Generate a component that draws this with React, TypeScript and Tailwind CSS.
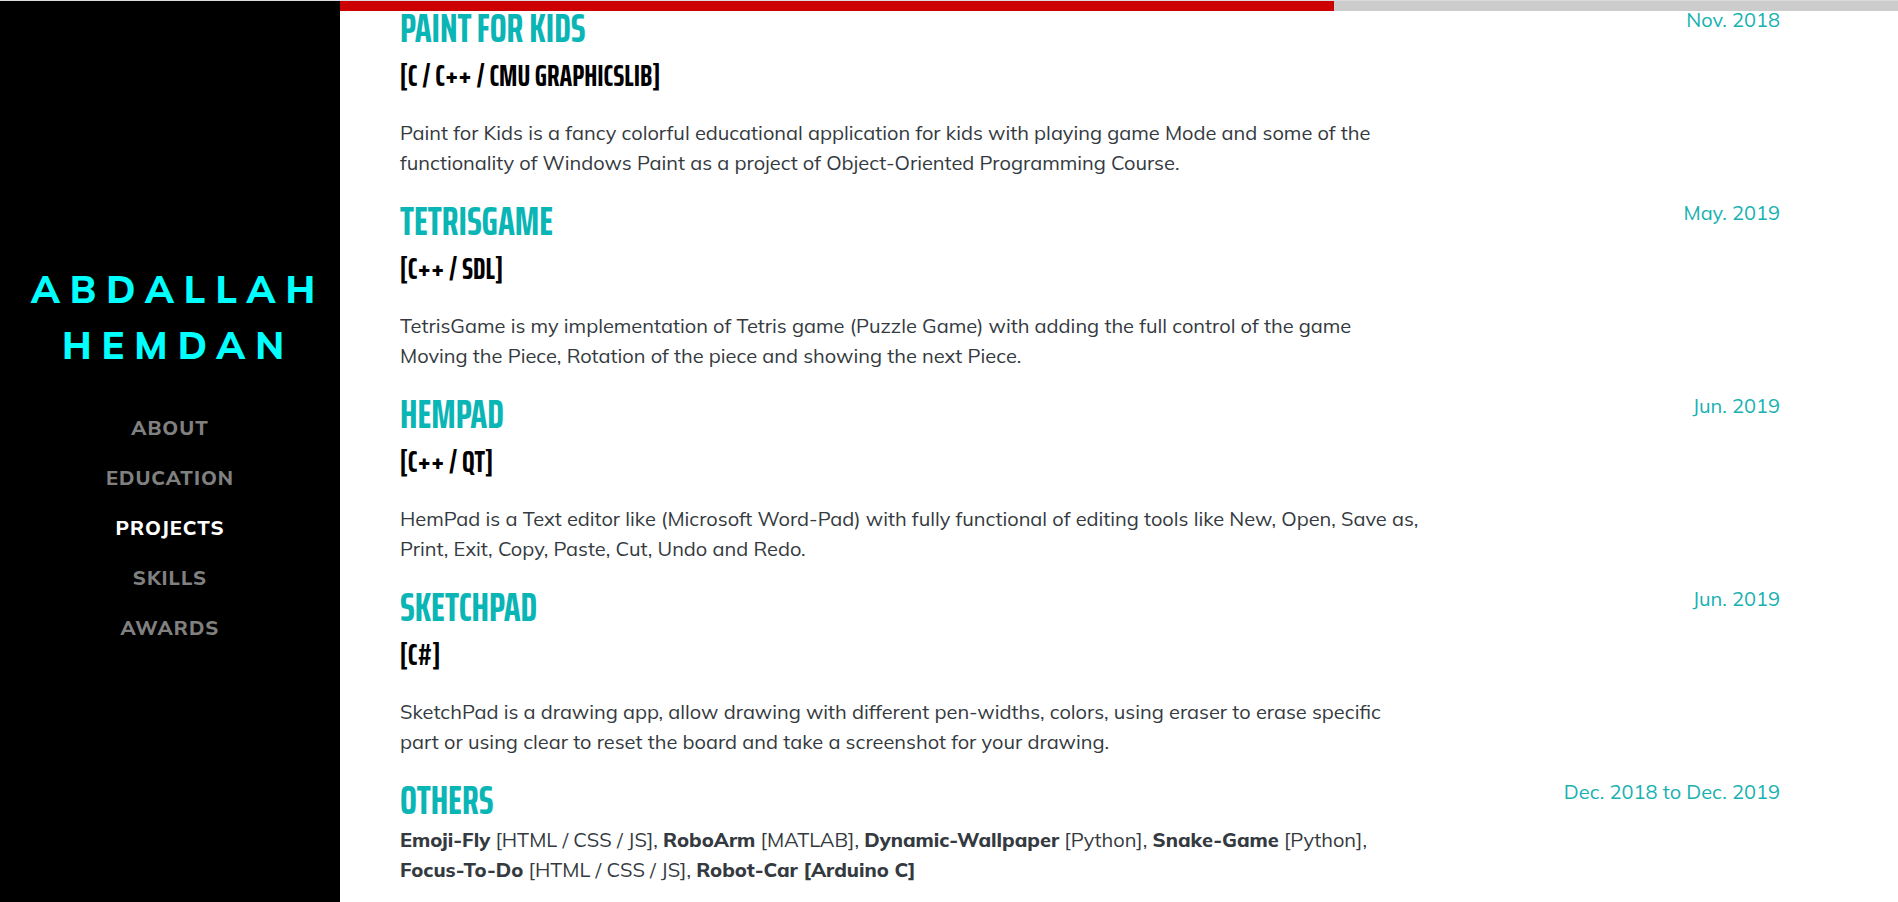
import type { ReactNode } from "react";

type Project = {
  title: string;
  stack?: string;
  date: string;
  body: ReactNode;
};

const links = ["About", "Education", "Projects", "Skills", "Awards"];
const active = "Projects";
const scrolled = 70.3;

const projects: Project[] = [
  {
    title: "Paint For Kids",
    stack: "[C / C++ / CMU graphicslib]",
    date: "Nov. 2018",
    body: "Paint for Kids is a fancy colorful educational application for kids with playing game Mode and some of the functionality of Windows Paint as a project of Object-Oriented Programming Course.",
  },
  {
    title: "TetrisGame",
    stack: "[C++ / SDL]",
    date: "May. 2019",
    body: "TetrisGame is my implementation of Tetris game (Puzzle Game) with adding the full control of the game\nMoving the Piece, Rotation of the piece and showing the next Piece.",
  },
  {
    title: "HemPad",
    stack: "[C++ / QT]",
    date: "Jun. 2019",
    body: "HemPad is a Text editor like (Microsoft Word-Pad) with fully functional of editing tools like New, Open, Save as, Print, Exit, Copy, Paste, Cut, Undo and Redo.",
  },
  {
    title: "SketchPad",
    stack: "[C#]",
    date: "Jun. 2019",
    body: "SketchPad is a drawing app, allow drawing with different pen-widths, colors, using eraser to erase specific part or using clear to reset the board and take a screenshot for your drawing.",
  },
  {
    title: "Others",
    date: "Dec. 2018 to Dec. 2019",
    body: (
      <>
        <b className="font-extrabold">Emoji-Fly</b> [HTML / CSS / JS], <b className="font-extrabold">RoboArm</b>{" "}
        [MATLAB], <b className="font-extrabold">Dynamic-Wallpaper</b> [Python],{" "}
        <b className="font-extrabold">Snake-Game</b> [Python],{" "}
        <b className="font-extrabold whitespace-nowrap">Focus-To-Do</b> [HTML / CSS / JS],{" "}
        <b className="font-extrabold">Robot-Car [Arduino C]</b>
      </>
    ),
  },
];

function ScrollProgress() {
  return (
    <div className="fixed inset-x-0 top-0 z-10 border-t border-[#dadce0] bg-[#cccccc]">
      <div
        role="progressbar"
        aria-label="Reading progress"
        aria-valuenow={scrolled}
        className="h-[10px] bg-[#cc0000]"
        style={{ width: `${scrolled}%` }}
      />
    </div>
  );
}

function Sidebar() {
  return (
    <aside className="sticky top-0 z-20 h-screen w-[340px] shrink-0 border-t border-[#dadce0] bg-black">
      <div className="flex h-full flex-col items-center justify-center gap-[30px] pt-[10px]">
        <a
          href="#top"
          className="pl-4 text-center text-[38px] leading-[56px] font-extrabold tracking-[10px] text-[#00ffff] uppercase"
        >
          Abdallah
          <br />
          Hemdan
        </a>
        <nav>
          <ul className="flex flex-col items-center">
            {links.map((link) => (
              <li key={link}>
                <a
                  href={`#${link.toLowerCase()}`}
                  className={`block text-[20px] leading-[50px] font-extrabold tracking-[1px] uppercase ${
                    link === active ? "text-white" : "text-[#808080]"
                  }`}
                >
                  {link}
                </a>
              </li>
            ))}
          </ul>
        </nav>
      </div>
    </aside>
  );
}

function Entry({ title, stack, date, body }: Project) {
  return (
    <article className="flex items-start justify-between gap-8">
      <div className="max-w-5xl min-w-0">
        <h3 className="font-['Saira_ExtraCondensed','Open_Sans_Condensed',sans-serif] text-[40px] leading-[49px] font-bold text-[#0ab5b5] uppercase">
          {title}
        </h3>
        {stack && (
          <h4 className="mt-[5px] mb-6 font-['Saira_ExtraCondensed','Open_Sans_Condensed',sans-serif] text-[30px] leading-9 font-bold text-black uppercase">
            {stack}
          </h4>
        )}
        <p className="whitespace-pre-line">{body}</p>
      </div>
      <span className="shrink-0 leading-8 text-[#17b1b1]">{date}</span>
    </article>
  );
}

export default function App() {
  return (
    <div className="flex min-h-screen bg-white font-[Mulish,Nunito,'Open_Sans',sans-serif] text-[20px] leading-[30px] text-[#343a40]">
      <ScrollProgress />
      <Sidebar />
      <main className="flex min-w-0 flex-1 flex-col gap-[19px] pt-1 pr-[118px] pl-[60px]">
        {projects.map((project) => (
          <Entry key={project.title} {...project} />
        ))}
      </main>
    </div>
  );
}
